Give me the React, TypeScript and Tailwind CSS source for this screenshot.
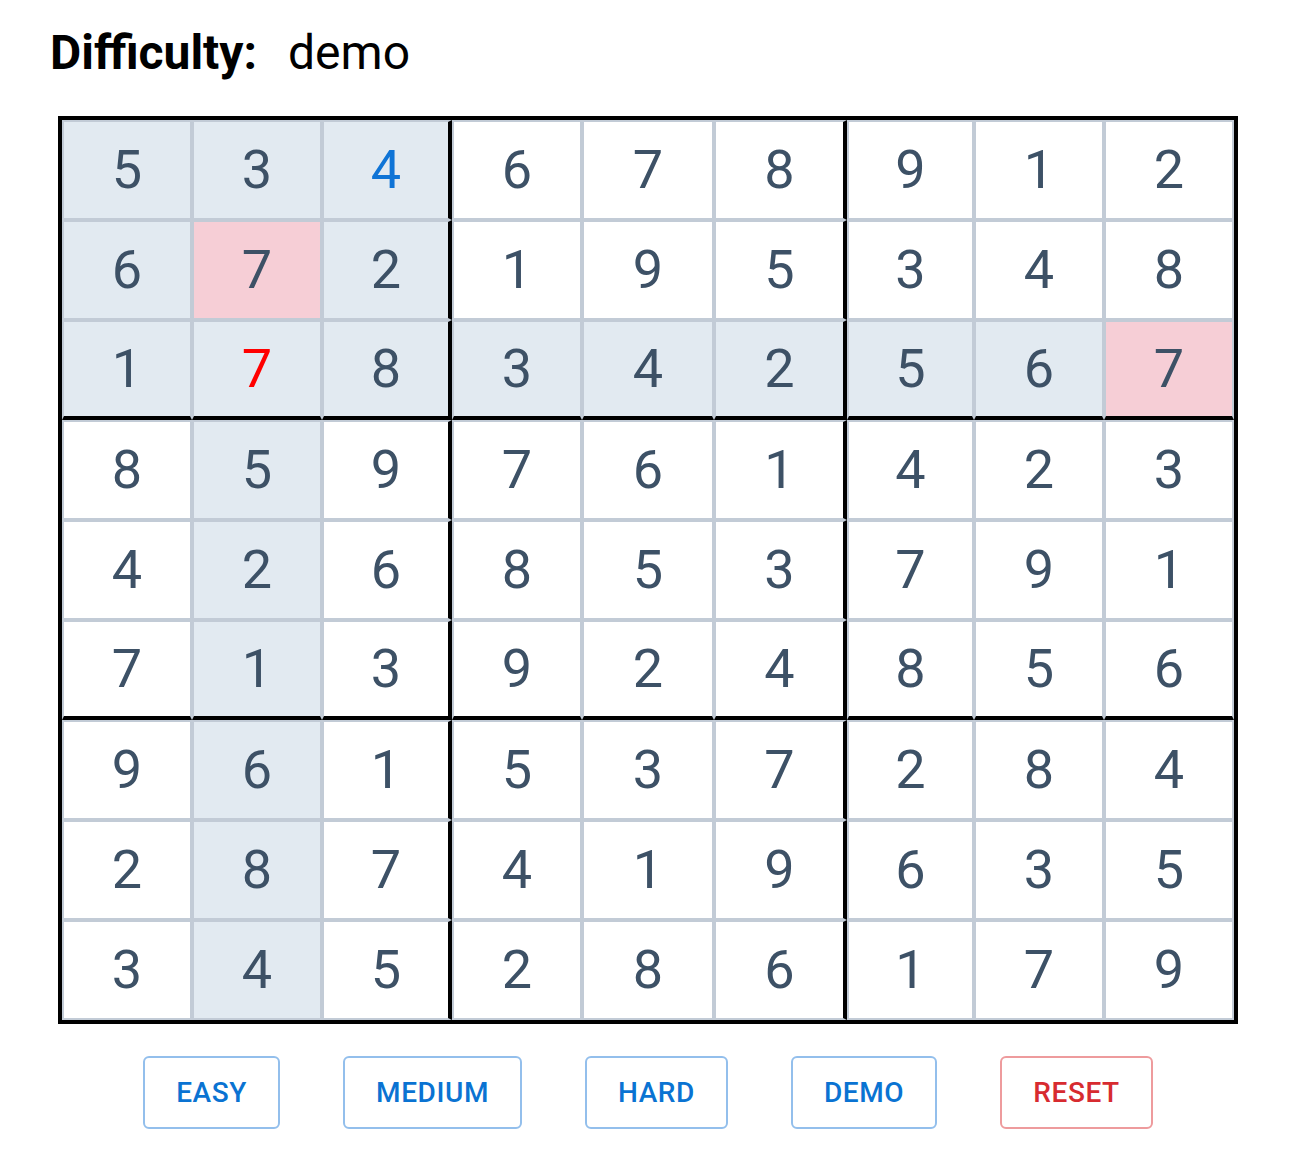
const board = [
  [5, 3, 4, 6, 7, 8, 9, 1, 2],
  [6, 7, 2, 1, 9, 5, 3, 4, 8],
  [1, 7, 8, 3, 4, 2, 5, 6, 7],
  [8, 5, 9, 7, 6, 1, 4, 2, 3],
  [4, 2, 6, 8, 5, 3, 7, 9, 1],
  [7, 1, 3, 9, 2, 4, 8, 5, 6],
  [9, 6, 1, 5, 3, 7, 2, 8, 4],
  [2, 8, 7, 4, 1, 9, 6, 3, 5],
  [3, 4, 5, 2, 8, 6, 1, 7, 9],
];

// selected cell + conflicts
const sel = { r: 2, c: 1 };
const conflicts = ['1-1', '2-8'];
const userCells = ['0-2'];

const levels = ['EASY', 'MEDIUM', 'HARD', 'DEMO'];

const Cell = ({ r, c, value }: { r: number; c: number; value: number }) => {
  const key = `${r}-${c}`;
  const related =
    r === sel.r ||
    c === sel.c ||
    (Math.floor(r / 3) === Math.floor(sel.r / 3) && Math.floor(c / 3) === Math.floor(sel.c / 3));
  let bg = 'bg-white';
  if (related) bg = 'bg-[#e2eaf1]';
  if (conflicts.includes(key)) bg = 'bg-[#f6ced6]';

  let color = 'text-[#3d5166]';
  if (userCells.includes(key)) color = 'text-[#0f74d6]';
  if (r === sel.r && c === sel.c) color = 'text-[#ff0000]';

  const right = c === 2 || c === 5 ? 'border-r-4 border-r-black' : '';
  const bottom = r === 2 || r === 5 ? 'border-b-4 border-b-black' : '';

  return (
    <div
      className={`h-[100px] flex items-center justify-center border-2 border-[#c2cbd6] text-[54px] leading-none ${bg} ${color} ${right} ${bottom}`}
    >
      {value}
    </div>
  );
};

const App = () => {
  return (
    <div className="min-h-[1160px] bg-white pl-[50px] pt-[25px]" style={{ fontFamily: 'Roboto, sans-serif' }}>
      <h1 className="text-[48px] leading-[56px] text-black">
        <span className="font-bold">Difficulty:</span>
        <span className="ml-[31px]">demo</span>
      </h1>
      <div className="ml-2 mt-[35px] w-[1180px]">
        <div className="grid grid-cols-[130px_130px_130px_130px_132px_133px_127px_130px_130px] border-4 border-black">
          {board.map((row, r) => row.map((v, c) => <Cell key={`${r}-${c}`} r={r} c={c} value={v} />))}
        </div>
        <div className="mt-8 flex justify-center gap-[63px]">
          {levels.map((l) => (
            <button
              key={l}
              className="h-[73px] px-[31px] border-2 border-[#93bfec] rounded-md text-[#0a73d2] text-[28px] font-medium tracking-[0.6px]"
            >
              {l}
            </button>
          ))}
          <button className="h-[73px] px-[31px] border-2 border-[#ee9b9d] rounded-md text-[#d72b30] text-[28px] font-medium tracking-[0.6px]">
            RESET
          </button>
        </div>
      </div>
    </div>
  );
};

export default App;
